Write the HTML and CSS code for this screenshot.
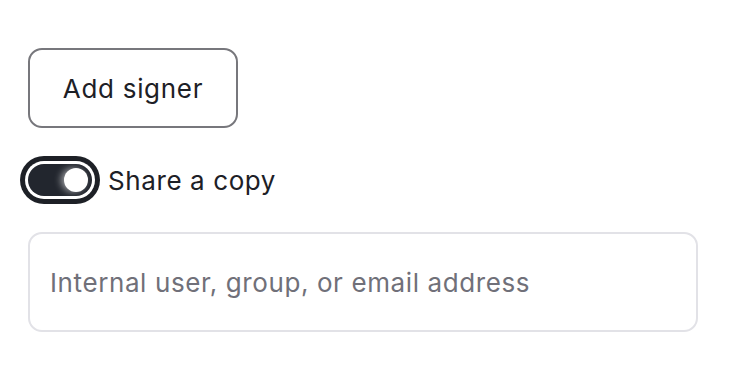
FILE: index.html
```html
<!DOCTYPE html>
<html lang="en">
  <head>
    <meta charset="UTF-8" />
    <meta name="viewport" content="width=device-width, initial-scale=1.0" />
    <title>Recipients</title>
    <link rel="stylesheet" href="styles.css">
  </head>
  <body>
    <div class="panel">
      <button type="button" class="btn-outline">Add signer</button>

      <label class="toggle-row">
        <span class="toggle on"><span class="knob"></span></span>
        <span class="toggle-label">Share a copy</span>
      </label>

      <input type="text" class="recipient-input" placeholder="Internal user, group, or email address" />
    </div>
  </body>
</html>
```

FILE: styles.css
```css
body {
  font-family: Inter, "Noto Sans", sans-serif;
  background-color: #ffffff;
  color: #1d2026;
  margin: 0;
  padding: 0;
  letter-spacing: 0.6px;
}
.panel {
  display: flex;
  flex-direction: column;
  align-items: flex-start;
  gap: 36px;
  padding: 48px 28px 0 28px;
  width: 670px;
}
.btn-outline {
  font-family: inherit;
  font-size: 26px;
  letter-spacing: 0.7px;
  color: #1d2026;
  background: #fff;
  border: 2px solid #77777c;
  border-radius: 14px;
  width: 210px;
  height: 80px;
  padding: 0;
  cursor: pointer;
}
.toggle-row {
  display: flex;
  align-items: center;
  gap: 16px;
  height: 32px;
  cursor: pointer;
}
.toggle {
  position: relative;
  display: block;
  width: 64px;
  height: 32px;
  border-radius: 16px;
  background: #22262e;
  box-shadow: 0 0 0 3px #fff, 0 0 0 8px #1d2026;
}
.toggle .knob {
  position: absolute;
  top: 4px;
  right: 4px;
  width: 24px;
  height: 24px;
  border-radius: 50%;
  background: #fff;
  box-shadow: -3px 0 7px rgba(255, 255, 255, 0.55);
}
.toggle-label {
  font-size: 26px;
}
.recipient-input {
  box-sizing: border-box;
  width: 670px;
  height: 100px;
  font-family: inherit;
  font-size: 26px;
  letter-spacing: 0.6px;
  color: #1d2026;
  border: 2px solid #e2e2e7;
  border-radius: 14px;
  padding: 0 20px;
  outline: none;
}
.recipient-input::placeholder {
  color: #707079;
}
```
